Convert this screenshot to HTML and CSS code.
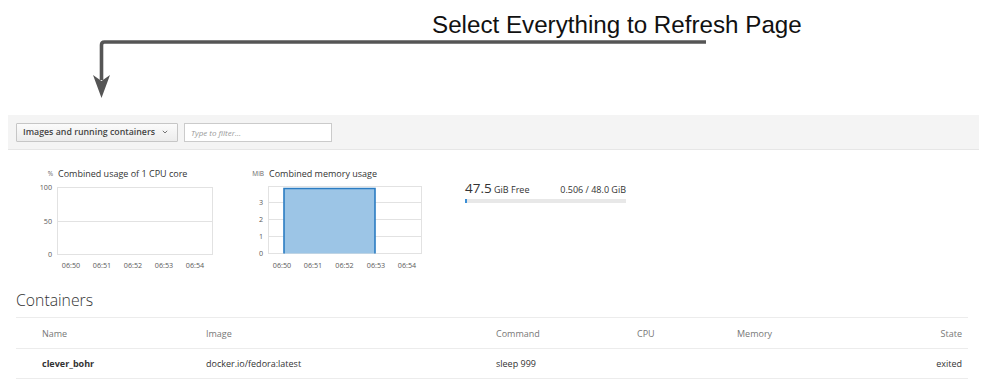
FILE: index.html
```html
<!DOCTYPE html>
<html>
<head>
<meta charset="utf-8">
<link rel="stylesheet" href="styles.css">
</head>
<body>
<div class="annotation">
  <div class="note">Select Everything to Refresh Page</div>
  <svg class="arrow" width="1000" height="115" viewBox="0 0 1000 115">
    <path d="M706 42 H104.5 Q101.5 42 101.5 45 V80" fill="none" stroke="#555" stroke-width="3.6"/>
    <path d="M93 75 L101.5 81 L110 75 L101.5 98 Z" fill="#555"/>
  </svg>
</div>

<div class="toolbar">
  <div class="select"><span>Images and running containers</span><svg class="chev" width="6" height="4" viewBox="0 0 6 4"><path d="M0.8 0.8 L3 3 L5.2 0.8" fill="none" stroke="#666" stroke-width="0.9"/></svg></div>
  <div class="filter">Type to filter...</div>
</div>

<div class="dash">
  <div class="chart">
    <div class="chart-title"><span class="unit">%</span><span>Combined usage of 1 CPU core</span></div>
    <svg width="185" height="92" viewBox="0 0 185 92" class="plot">
      <rect x="27.5" y="5.5" width="155" height="67" fill="#fff" stroke="#e2e2e2"/>
      <line x1="27" y1="39.5" x2="182" y2="39.5" stroke="#e2e2e2"/>
      <g class="ylab" text-anchor="end">
        <text x="22" y="8">100</text>
        <text x="22" y="42">50</text>
        <text x="22" y="75">0</text>
      </g>
      <g class="xlab" text-anchor="middle">
        <text x="41" y="86">06:50</text>
        <text x="72" y="86">06:51</text>
        <text x="103" y="86">06:52</text>
        <text x="134" y="86">06:53</text>
        <text x="165" y="86">06:54</text>
      </g>
    </svg>
  </div>
  <div class="chart">
    <div class="chart-title"><span class="unit">MiB</span><span>Combined memory usage</span></div>
    <svg width="185" height="92" viewBox="0 0 185 92" class="plot">
      <rect x="27.5" y="4.5" width="153" height="67" fill="#fff" stroke="#e2e2e2"/>
      <line x1="27" y1="20.5" x2="181" y2="20.5" stroke="#e2e2e2"/>
      <line x1="27" y1="37.5" x2="181" y2="37.5" stroke="#e2e2e2"/>
      <line x1="27" y1="54.5" x2="181" y2="54.5" stroke="#e2e2e2"/>
      <path d="M43 71.5 V6.5 H134 V71.5" fill="#9cc5e6" stroke="#2b7cc2" stroke-width="1.6"/>
      <g class="ylab" text-anchor="end">
        <text x="22" y="23">3</text>
        <text x="22" y="40">2</text>
        <text x="22" y="57">1</text>
        <text x="22" y="74">0</text>
      </g>
      <g class="xlab" text-anchor="middle">
        <text x="41" y="86">06:50</text>
        <text x="72" y="86">06:51</text>
        <text x="103.5" y="86">06:52</text>
        <text x="135" y="86">06:53</text>
        <text x="166" y="86">06:54</text>
      </g>
    </svg>
  </div>
  <div class="storage">
    <div class="free"><span><span class="big">47.5</span> GiB Free</span><span>0.506 / 48.0 GiB</span></div>
    <div class="bar"><div class="bar-fill" style="width:2px"></div></div>
  </div>
</div>

<div class="containers">
  <h2 class="heading">Containers</h2>
  <div class="table">
    <div class="row head">
      <span>Name</span><span>Image</span><span>Command</span><span>CPU</span><span>Memory</span><span class="right">State</span>
    </div>
    <div class="row">
      <span class="name">clever_bohr</span><span>docker.io/fedora:latest</span><span>sleep 999</span><span></span><span></span><span class="right">exited</span>
    </div>
  </div>
</div>
</body>
</html>
```

FILE: styles.css
```css
* { box-sizing: border-box; }
body {
  margin: 0;
  font-family: "Open Sans", "DejaVu Sans", sans-serif;
  color: #333;
  background: #fff;
}
.annotation {
  position: relative;
  height: 115px;
}
.note {
  font-family: "Liberation Sans", Arial, sans-serif;
  font-size: 24.2px;
  color: #111;
  padding: 12px 0 0 432px;
  line-height: 26px;
  white-space: nowrap;
}
.arrow {
  position: absolute;
  left: 0;
  top: 0;
}
.toolbar {
  margin: 0 21px 0 8px;
  height: 35px;
  background: #f4f4f4;
  border-bottom: 1px solid #e6e6e6;
  display: flex;
  align-items: center;
  padding: 0 8px;
  gap: 6px;
}
.select {
  width: 162px;
  height: 19px;
  border: 1px solid #c6c6c6;
  border-radius: 1px;
  background: linear-gradient(#fbfbfb, #ececec);
  font-size: 8.8px;
  font-weight: 600;
  color: #444;
  padding: 0 9px 0 6px;
  display: flex;
  align-items: center;
  justify-content: space-between;
  white-space: nowrap;
}
.chev { display: block; }
.filter {
  width: 148px;
  height: 19px;
  border: 1px solid #cbcbcb;
  background: #fff;
  font-size: 8px;
  font-style: italic;
  color: #9a9a9a;
  padding-left: 6px;
  display: flex;
  align-items: center;
}
.dash {
  display: flex;
  height: 135px;
  padding: 15px 0 0 30px;
}
.chart + .chart { margin-left: 26px; }
.chart-title {
  height: 17px;
  display: flex;
  align-items: center;
  font-size: 9px;
  color: #333;
}
.unit {
  width: 28px;
  padding-right: 5px;
  text-align: right;
  font-size: 6.5px;
  color: #666;
}
.plot { display: block; }
.plot text {
  font-family: "Open Sans", sans-serif;
  font-size: 7.2px;
  fill: #5a5a5a;
}
.storage {
  margin-left: 39px;
  margin-top: 14px;
  width: 161px;
}
.free {
  display: flex;
  justify-content: space-between;
  align-items: baseline;
  font-size: 9px;
  color: #333;
  height: 18px;
}
.big { font-size: 13.5px; }
.bar {
  margin-top: 2px;
  height: 4px;
  background: #e8e8e8;
}
.bar-fill {
  height: 4px;
  background: #3c8fd6;
}
.containers {
  margin: 0 32px 0 16px;
}
.heading {
  margin: 0;
  height: 32px;
  padding-bottom: 2px;
  display: flex;
  align-items: center;
  font-size: 15.8px;
  font-weight: 300;
  color: #333;
}
.table { border-top: 1px solid #ececec; }
.row {
  display: grid;
  grid-template-columns: 164px 290px 141px 100px 1fr auto;
  align-items: center;
  padding: 0 6px 0 26px;
  height: 31px;
  border-bottom: 1px solid #ececec;
  font-size: 9px;
  color: #333;
}
.row + .row { height: 30px; }
.head { color: #777; }
.name { font-weight: 700; }
.right { text-align: right; }
```
